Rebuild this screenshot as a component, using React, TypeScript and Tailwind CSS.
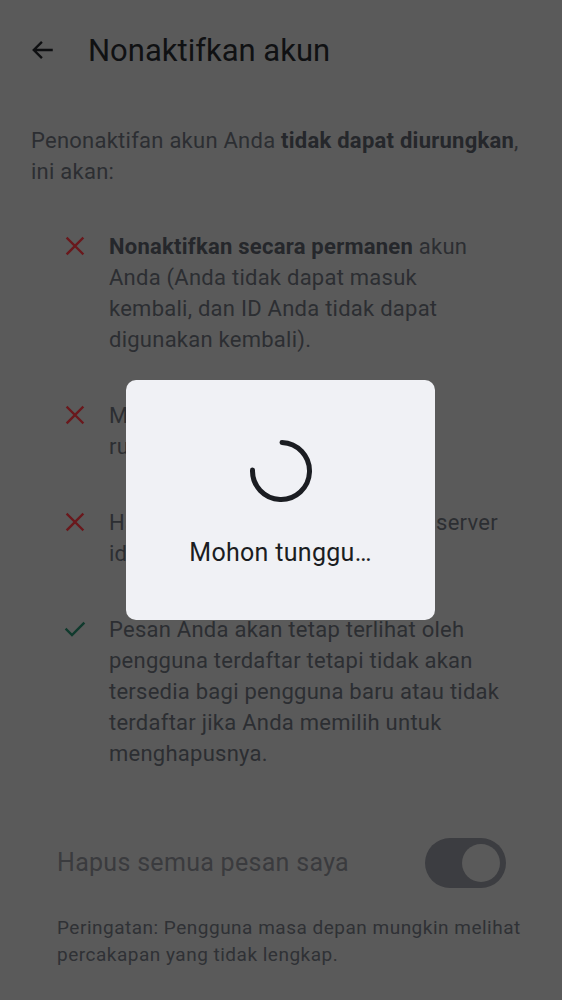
const items = [
  {
    ok: false,
    content: (
      <>
        <span className="font-bold text-[#25272b]">Nonaktifkan secara permanen</span> akun Anda (Anda tidak dapat masuk
        kembali, dan ID Anda tidak dapat digunakan kembali).
      </>
    ),
  },
  { ok: false, content: <>Mengeluarkan Anda dari semua ruangan obrolan.</> },
  { ok: false, content: <>Hapus informasi akun Anda dari server identitas kami.</> },
  {
    ok: true,
    content: (
      <>
        Pesan Anda akan tetap terlihat oleh pengguna terdaftar tetapi tidak akan tersedia bagi pengguna baru atau tidak
        terdaftar jika Anda memilih untuk menghapusnya.
      </>
    ),
  },
]

function CrossIcon() {
  return (
    <svg width="24" height="24" viewBox="0 0 24 24" fill="none">
      <path d="M4.5 4.5l15 15M19.5 4.5l-15 15" stroke="#6a181c" strokeWidth="2.4" strokeLinecap="square" />
    </svg>
  )
}

function CheckIcon() {
  return (
    <svg width="24" height="24" viewBox="0 0 24 24" fill="none">
      <path d="M3.5 12.5l5.5 5.5L20.5 6.5" stroke="#103a2d" strokeWidth="2.4" strokeLinecap="square" />
    </svg>
  )
}

export default function App() {
  return (
    <div className="relative h-[1000px] w-full overflow-hidden bg-[#5a5a5a] font-['Roboto',sans-serif]">
      <header className="flex h-[100px] items-center pl-[30px]">
        <svg width="26" height="26" viewBox="0 0 24 24" fill="none" className="-mt-[1px]">
          <path d="M21 12H3.5M11 4.5L3.5 12l7.5 7.5" stroke="#0e0f11" strokeWidth="2.2" />
        </svg>
        <h1 className="ml-[32px] text-[31px] leading-none text-[#101113]">Nonaktifkan akun</h1>
      </header>

      <div className="px-[31px] pt-[25px]">
        <p className="text-[22px] leading-[31px] tracking-[0.25px] text-[#2c2e32]">
          Penonaktifan akun Anda <span className="font-bold text-[#25272b]">tidak dapat diurungkan</span>, ini akan:
        </p>

        <ul className="mt-[44px] flex flex-col gap-[45px] pl-[32px] pr-[26px]">
          {items.map((item, i) => (
            <li key={i} className="flex gap-[22px]">
              <div className="mt-[3px] shrink-0">{item.ok ? <CheckIcon /> : <CrossIcon />}</div>
              <p className="text-[22px] leading-[31px] tracking-[0.25px] text-[#2c2e32]">{item.content}</p>
            </li>
          ))}
        </ul>

        <div className="mt-[69px] flex items-center justify-between pl-[26px] pr-[25px]">
          <span className="text-[25px] tracking-[0.3px] text-[#3a3b3e]">Hapus semua pesan saya</span>
          <div className="flex h-[50px] w-[81px] items-center justify-end rounded-full bg-[#3c3d41] pr-[6px]">
            <div className="h-[38px] w-[38px] rounded-full bg-[#5a5a5a]" />
          </div>
        </div>

        <p className="mt-[26px] pl-[26px] pr-[4px] text-[19px] leading-[27px] tracking-[0.5px] text-[#2f3135]">
          Peringatan: Pengguna masa depan mungkin melihat percakapan yang tidak lengkap.
        </p>
      </div>

      <div className="absolute left-[126px] top-[380px] flex h-[240px] w-[309px] flex-col items-center rounded-[10px] bg-[#f0f1f5]">
        <svg width="66" height="66" viewBox="0 0 66 66" className="mt-[58px]">
          <circle
            cx="33"
            cy="33"
            r="28.5"
            fill="none"
            stroke="#1b1d22"
            strokeWidth="5"
            strokeLinecap="round"
            strokeDasharray="134 200"
            transform="rotate(-88 33 33)"
          />
        </svg>
        <p className="mt-[36px] text-[25px] leading-none tracking-[0.3px] text-[#1b1d22]">Mohon tunggu…</p>
      </div>
    </div>
  )
}
